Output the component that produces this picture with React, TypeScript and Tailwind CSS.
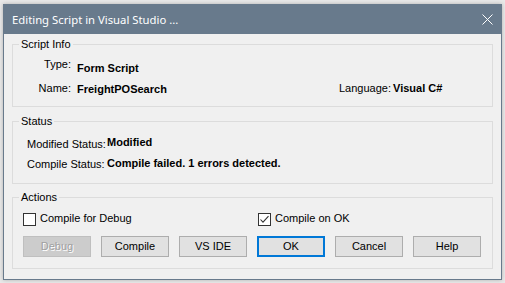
import type { ReactNode } from "react";

const Group = ({ label, className, children }: { label: string; className: string; children: ReactNode }) => (
  <div className={`relative border border-[#dcdcdc] ${className}`}>
    <span className="absolute left-[6px] -top-[7px] bg-[#f0f0f0] px-[2px] leading-[13px]">{label}</span>
    {children}
  </div>
);

const Checkbox = ({ checked }: { checked?: boolean }) => (
  <div className="w-[13px] h-[13px] border border-[#333333] bg-white shrink-0 flex items-center justify-center">
    {checked && (
      <svg width="11" height="11" viewBox="0 0 11 11">
        <polyline points="1.5,5.5 4,8.2 9.5,2.2" fill="none" stroke="#333333" strokeWidth="1.1" />
      </svg>
    )}
  </div>
);

const Button = ({ label, variant }: { label: string; variant?: "default" | "disabled" }) => {
  if (variant === "disabled")
    return (
      <div className="w-[68px] h-[21px] border border-[#bfbfbf] bg-[#cccccc] flex items-center justify-center text-[#a0a0a0] [text-shadow:1px_1px_0_#ffffff]">
        {label}
      </div>
    );
  if (variant === "default")
    return (
      <div className="w-[68px] h-[21px] border-2 border-[#0078d7] bg-[#e1e1e1] flex items-center justify-center">
        {label}
      </div>
    );
  return (
    <div className="w-[68px] h-[21px] border border-[#adadad] bg-[#e1e1e1] flex items-center justify-center">
      {label}
    </div>
  );
};

export default function App() {
  return (
    <div className="w-[505px] h-[283px] bg-[#e9e9e9] pt-[4px] pl-[3px] overflow-hidden">
      <div
        className="w-[499px] h-[276px] border border-[#687a8c] bg-[#f0f0f0] flex flex-col shadow-[0_0_4px_rgba(0,0,0,0.25)] text-[11px] leading-[13px] text-black"
        style={{ fontFamily: '"Liberation Sans", Arial, sans-serif' }}
      >
        {/* title bar */}
        <div className="h-[29px] bg-[#687a8c] flex items-start pl-[8px] pr-[8px] text-white">
          <span className="pt-[7px] text-[11.3px] leading-[16px]" style={{ fontFamily: '"Noto Sans", sans-serif' }}>
            Editing Script in Visual Studio ...
          </span>
          <svg className="ml-auto mt-[9px]" width="11" height="11" viewBox="0 0 11 11">
            <path d="M0.5 0.5 L10.5 10.5 M10.5 0.5 L0.5 10.5" stroke="white" strokeWidth="1" />
          </svg>
        </div>

        <div className="flex flex-col px-[8px]">
          <Group label="Script Info" className="mt-[10px] h-[63px]">
            <div className="flex items-start pt-[13px]">
              <div className="w-[58px] text-right">Type:</div>
              <div className="ml-[6px] mt-[4px] font-bold">Form Script</div>
            </div>
            <div className="flex items-start mt-[7px]">
              <div className="w-[58px] text-right">Name:</div>
              <div className="ml-[6px] mt-[1px] w-[262px] font-bold">FreightPOSearch</div>
              <div>Language:</div>
              <div className="ml-[2px] font-bold">Visual C#</div>
            </div>
          </Group>

          <Group label="Status" className="mt-[14px] h-[63px]">
            <div className="flex items-start pt-[14px] pl-[14px]">
              <div className="w-[80px] mt-[2px]">Modified Status:</div>
              <div className="font-bold">Modified</div>
            </div>
            <div className="flex items-start mt-[6px] pl-[14px]">
              <div className="w-[80px] mt-[1px]">Compile Status:</div>
              <div className="font-bold">Compile failed. 1 errors detected.</div>
            </div>
          </Group>

          <Group label="Actions" className="mt-[13px] h-[72px]">
            <div className="flex items-start pt-[15px] pl-[10px]">
              <div className="w-[235px] flex items-start">
                <Checkbox />
                <span className="ml-[4px] -mt-[1px]">Compile for Debug</span>
              </div>
              <div className="flex items-start">
                <Checkbox checked />
                <span className="ml-[4px] -mt-[1px]">Compile on OK</span>
              </div>
            </div>
            <div className="flex gap-[10px] mt-[10px] pl-[10px]">
              <Button label="Debug" variant="disabled" />
              <Button label="Compile" />
              <Button label="VS IDE" />
              <Button label="OK" variant="default" />
              <Button label="Cancel" />
              <Button label="Help" />
            </div>
          </Group>
        </div>
      </div>
    </div>
  );
}
